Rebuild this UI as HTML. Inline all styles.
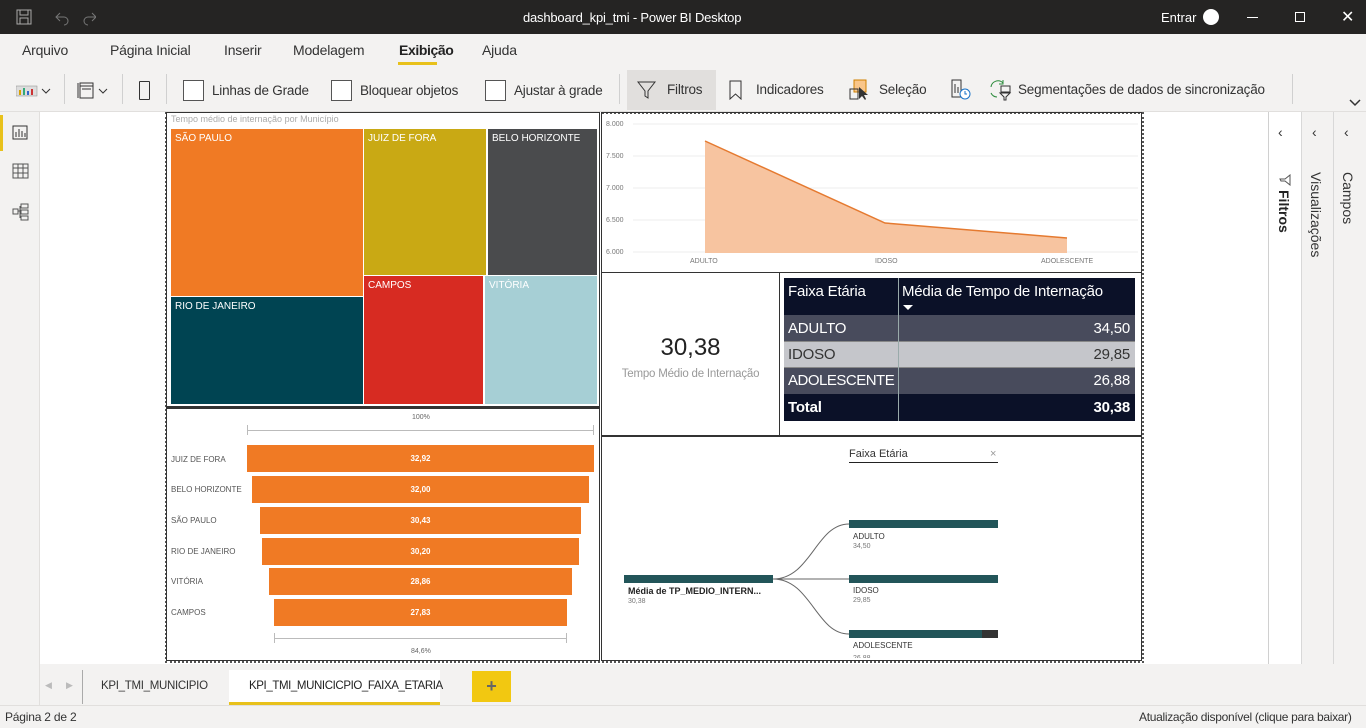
<!DOCTYPE html>
<html><head><meta charset="utf-8"><style>
*{margin:0;padding:0;box-sizing:border-box}
body{width:1366px;height:728px;overflow:hidden;font-family:"Liberation Sans",sans-serif;background:#fff;position:relative}
.a{position:absolute}
.t{position:absolute;white-space:nowrap}
.cb{position:absolute;width:21px;height:21px;border:1px solid #555;background:#fff}
.sep{position:absolute;width:1px;background:#d0d0d0}
.tm{position:absolute;color:#fff;font-size:10px;padding:4px 0 0 4px}
.fl{position:absolute;font-size:8px;color:#555;left:171px}
.fb{position:absolute;background:#f07a24;height:27px;color:#fff;font-size:8px;font-weight:bold;text-align:center;line-height:27px}
.tb{font-size:13.5px;color:#333;letter-spacing:-0.2px}
</style></head><body>
<!-- title bar -->
<div class="a" style="left:0;top:0;width:1366px;height:34px;background:#252423"></div>
<svg class="a" style="left:16px;top:9px" width="80" height="18"><rect x="1" y="1" width="14" height="14" fill="none" stroke="#aaa"/><rect x="4" y="1" width="8" height="5" fill="none" stroke="#aaa"/><rect x="4" y="9" width="8" height="6" fill="none" stroke="#aaa"/><path d="M44 4 L40 8 L44 12 M40 8 H48 A4 4 0 0 1 48 16" fill="none" stroke="#777"/><path d="M76 4 L80 8 L76 12 M80 8 H72 A4 4 0 0 0 72 16" fill="none" stroke="#777"/></svg>
<div class="t" style="left:523px;top:10px;color:#fff;font-size:13px;letter-spacing:-0.2px">dashboard_kpi_tmi - Power BI Desktop</div>
<div class="t" style="left:1161px;top:10px;color:#fff;font-size:13px">Entrar</div>
<div class="a" style="left:1203px;top:9px;width:16px;height:16px;border-radius:50%;background:#fff"></div>
<div class="a" style="left:1247px;top:17px;width:11px;height:1px;background:#fff"></div>
<div class="a" style="left:1295px;top:12px;width:10px;height:10px;border:1px solid #fff"></div>
<div class="t" style="left:1341px;top:7px;color:#fff;font-size:16px">✕</div>
<!-- menu -->
<div class="a" style="left:0;top:34px;width:1366px;height:78px;background:#f3f2f1;border-bottom:1px solid #e1dfdd"></div>
<div class="t tb" style="left:22px;top:42px;font-size:14px">Arquivo</div>
<div class="t tb" style="left:110px;top:42px;font-size:14px">Página Inicial</div>
<div class="t tb" style="left:224px;top:42px;font-size:14px">Inserir</div>
<div class="t tb" style="left:293px;top:42px;font-size:14px">Modelagem</div>
<div class="t" style="left:399px;top:42px;font-size:14px;color:#222;font-weight:bold;letter-spacing:-0.4px">Exibição</div>
<div class="a" style="left:398px;top:62px;width:39px;height:3px;background:#e8c11b"></div>
<div class="t tb" style="left:482px;top:42px;font-size:14px">Ajuda</div>
<!-- toolbar -->
<svg class="a" style="left:16px;top:83px" width="50" height="14"><rect x="0" y="3" width="21" height="10" fill="#ddd" stroke="#888" stroke-width=".5"/><rect x="3" y="7" width="2" height="5" fill="#d9a100"/><rect x="7" y="5" width="2" height="7" fill="#3a7"/><rect x="11" y="8" width="2" height="4" fill="#36c"/><rect x="15" y="6" width="2" height="6" fill="#c33"/><path d="M26 6 L30 10 L34 6" fill="none" stroke="#333"/></svg>
<div class="sep" style="left:64px;top:74px;height:30px"></div>
<svg class="a" style="left:77px;top:80px" width="36" height="20"><rect x="3" y="3" width="13" height="15" fill="none" stroke="#333"/><path d="M1 3V18M3 6H16M5 9H14" stroke="#333"/><path d="M22 9 L26 13 L30 9" fill="none" stroke="#333"/></svg>
<div class="sep" style="left:122px;top:74px;height:30px"></div>
<div class="a" style="left:139px;top:81px;width:11px;height:19px;border:1px solid #333;border-radius:1px"></div>
<div class="sep" style="left:166px;top:74px;height:30px"></div>
<div class="cb" style="left:183px;top:80px"></div><div class="t tb" style="left:212px;top:83px">Linhas de Grade</div>
<div class="cb" style="left:331px;top:80px"></div><div class="t tb" style="left:360px;top:83px">Bloquear objetos</div>
<div class="cb" style="left:485px;top:80px"></div><div class="t tb" style="left:514px;top:83px">Ajustar à grade</div>
<div class="sep" style="left:619px;top:74px;height:30px"></div>
<div class="a" style="left:627px;top:70px;width:89px;height:40px;background:#e1dfdd"></div>
<svg class="a" style="left:637px;top:80px" width="20" height="20"><path d="M1 2H18L11 11V18L8 16V11Z" fill="none" stroke="#333"/></svg>
<div class="t tb" style="left:667px;top:82px">Filtros</div>
<svg class="a" style="left:728px;top:80px" width="16" height="20"><path d="M2 1H13V19L7.5 14L2 19Z" fill="none" stroke="#333"/></svg>
<div class="t tb" style="left:756px;top:82px">Indicadores</div>
<svg class="a" style="left:849px;top:79px" width="22" height="22"><rect x="5" y="1" width="12" height="12" fill="#f9c68a" stroke="#d08000"/><rect x="1" y="10" width="8" height="10" fill="none" stroke="#333"/><path d="M10 8L10 20L13 17L16 21L17 20L15 16L19 16Z" fill="#333"/></svg>
<div class="t tb" style="left:879px;top:82px">Seleção</div>
<svg class="a" style="left:950px;top:79px" width="22" height="22"><rect x="2" y="1" width="9" height="17" fill="none" stroke="#333"/><path d="M5 5V14M8 8V14" stroke="#333"/><circle cx="15" cy="15" r="5" fill="#fff" stroke="#1a73c8"/><path d="M15 12V15H17" stroke="#1a73c8" fill="none"/></svg>
<svg class="a" style="left:988px;top:79px" width="24" height="22"><path d="M3 8A7 7 0 0 1 15 4M15 1V5H11" fill="none" stroke="#2a8a3a"/><path d="M3 14A7 7 0 0 0 9 18" fill="none" stroke="#2a8a3a"/><rect x="13" y="7" width="9" height="6" fill="none" stroke="#333"/><path d="M12 14H22L18 18V21H16V18Z" fill="none" stroke="#333"/></svg>
<div class="t tb" style="left:1018px;top:82px">Segmentações de dados de sincronização</div>
<div class="sep" style="left:1292px;top:74px;height:30px"></div>
<svg class="a" style="left:1349px;top:98px" width="12" height="10"><path d="M1 2L6 7L11 2" fill="none" stroke="#333" stroke-width="1.5"/></svg>
<!-- left rail -->
<div class="a" style="left:0;top:112px;width:40px;height:552px;background:#f3f2f1;border-right:1px solid #e1dfdd"></div>
<div class="a" style="left:0;top:115px;width:3px;height:36px;background:#e8c11b"></div>
<svg class="a" style="left:12px;top:123px" width="18" height="18"><rect x="1" y="3" width="14" height="13" fill="none" stroke="#333"/><path d="M4 14V9M7 14V6M10 14V8M13 14V10" stroke="#333"/></svg>
<svg class="a" style="left:12px;top:163px" width="18" height="18"><rect x="1" y="1" width="15" height="14" fill="none" stroke="#555"/><path d="M1 5H16M1 10H16M6 1V15M11 1V15" stroke="#555"/></svg>
<svg class="a" style="left:12px;top:203px" width="18" height="18"><rect x="1" y="6" width="5" height="5" fill="none" stroke="#555"/><rect x="9" y="1" width="7" height="4" fill="none" stroke="#555"/><rect x="9" y="7" width="7" height="4" fill="none" stroke="#555"/><rect x="9" y="13" width="7" height="4" fill="none" stroke="#555"/><path d="M6 8H9M8 3V15" stroke="#555" fill="none"/></svg>
<!-- right panes -->
<div class="a" style="left:1268px;top:112px;width:1px;height:552px;background:#d0d0d0"></div>
<div class="a" style="left:1301px;top:112px;width:65px;height:552px;background:#f3f2f1"></div>
<div class="a" style="left:1301px;top:112px;width:1px;height:552px;background:#d8d8d8"></div>
<div class="a" style="left:1333px;top:112px;width:1px;height:552px;background:#d8d8d8"></div>
<div class="t" style="left:1278px;top:124px;font-size:14px;color:#333">‹</div>
<div class="t" style="left:1312px;top:124px;font-size:14px;color:#333">‹</div>
<div class="t" style="left:1344px;top:124px;font-size:14px;color:#333">‹</div>
<svg class="a" style="left:1279px;top:174px" width="12" height="12"><path d="M1 1H11L7 6V10L5 11V6Z" fill="none" stroke="#555" transform="rotate(90 6 6)"/></svg>
<div class="t" style="left:1276px;top:190px;font-size:14px;font-weight:bold;color:#222;writing-mode:vertical-rl">Filtros</div>
<div class="t" style="left:1308px;top:172px;font-size:14px;color:#333;writing-mode:vertical-rl">Visualizações</div>
<div class="t" style="left:1340px;top:172px;font-size:14px;color:#333;writing-mode:vertical-rl">Campos</div>
<!-- page border -->
<div class="a" style="left:165px;top:112px;width:979px;height:551px;border:2px dotted #555"></div>
<!-- treemap -->
<div class="a" style="left:166px;top:112px;width:434px;height:295px;background:#fff;border:1px solid #333"></div>
<div class="t" style="left:171px;top:114px;font-size:9px;color:#aaa">Tempo médio de internação por Município</div>
<div class="tm" style="left:171px;top:129px;width:192px;height:167px;background:#f07a24">SÃO PAULO</div>
<div class="tm" style="left:171px;top:297px;width:192px;height:107px;background:#004452">RIO DE JANEIRO</div>
<div class="tm" style="left:364px;top:129px;width:122px;height:146px;background:#c9a914">JUIZ DE FORA</div>
<div class="tm" style="left:488px;top:129px;width:109px;height:146px;background:#4a4b4d">BELO HORIZONTE</div>
<div class="tm" style="left:364px;top:276px;width:119px;height:128px;background:#d72b22">CAMPOS</div>
<div class="tm" style="left:485px;top:276px;width:112px;height:128px;background:#a6cfd5">VITÓRIA</div>
<!-- funnel -->
<div class="a" style="left:166px;top:407px;width:434px;height:254px;border:1px solid #333;border-top:2px solid #333"></div>
<div class="t" style="left:412px;top:414px;font-size:7px;color:#666">100%</div>
<div class="a" style="left:247px;top:430px;width:347px;height:1px;background:#bbb"></div>
<div class="a" style="left:247px;top:425px;width:1px;height:10px;background:#bbb"></div>
<div class="a" style="left:593px;top:425px;width:1px;height:10px;background:#bbb"></div>
<div class="fl" style="top:455px">JUIZ DE FORA</div>
<div class="fl" style="top:485px">BELO HORIZONTE</div>
<div class="fl" style="top:516px">SÃO PAULO</div>
<div class="fl" style="top:547px">RIO DE JANEIRO</div>
<div class="fl" style="top:577px">VITÓRIA</div>
<div class="fl" style="top:608px">CAMPOS</div>
<div class="fb" style="left:247px;top:445px;width:347px">32,92</div>
<div class="fb" style="left:252px;top:476px;width:337px">32,00</div>
<div class="fb" style="left:260px;top:507px;width:321px">30,43</div>
<div class="fb" style="left:262px;top:538px;width:317px">30,20</div>
<div class="fb" style="left:269px;top:568px;width:303px">28,86</div>
<div class="fb" style="left:274px;top:599px;width:293px">27,83</div>
<div class="a" style="left:274px;top:638px;width:293px;height:1px;background:#bbb"></div>
<div class="a" style="left:274px;top:633px;width:1px;height:10px;background:#bbb"></div>
<div class="a" style="left:566px;top:633px;width:1px;height:10px;background:#bbb"></div>
<div class="t" style="left:411px;top:648px;font-size:7px;color:#666">84,6%</div>
<!-- area chart -->
<div class="a" style="left:601px;top:112px;width:541px;height:161px;border:1px solid #333"></div>
<svg class="a" style="left:601px;top:112px" width="541" height="160">
<g font-family="Liberation Sans" font-size="7" fill="#777">
<text x="5" y="14">8.000</text><text x="5" y="46">7.500</text><text x="5" y="78">7.000</text><text x="5" y="110">6.500</text><text x="5" y="142">6.000</text>
<text x="89" y="151">ADULTO</text><text x="274" y="151">IDOSO</text><text x="440" y="151">ADOLESCENTE</text></g>
<g stroke="#eee"><path d="M32 12H537M32 44H537M32 76H537M32 108H537M32 140H537"/></g>
<path d="M104 29L284 111L466 126V141H104Z" fill="#f7c4a0"/>
<path d="M104 29L284 111L466 126" fill="none" stroke="#e57a30" stroke-width="1.5"/>
</svg>
<!-- card -->
<div class="a" style="left:601px;top:272px;width:179px;height:164px;border:1px solid #333"></div>
<div class="t" style="left:601px;top:334px;width:179px;text-align:center;font-size:24px;color:#222">30,38</div>
<div class="t" style="left:601px;top:368px;width:179px;text-align:center;font-size:11.5px;color:#999;letter-spacing:-0.2px">Tempo Médio de Internação</div>
<!-- table -->
<div class="a" style="left:779px;top:272px;width:363px;height:164px;border:1px solid #333"></div>
<div class="a" style="left:784px;top:278px;width:351px;height:143px;font-size:15px;letter-spacing:-0.2px">
<div class="a" style="left:0;top:0;width:351px;height:37px;background:#0b1128;color:#fff"></div>
<div class="t" style="left:4px;top:5px;color:#fff">Faixa Etária</div>
<div class="t" style="left:118px;top:5px;color:#fff">Média de Tempo de Internação</div>
<svg class="a" style="left:118px;top:26px" width="12" height="8"><path d="M1 1H11L6 6Z" fill="#fff"/></svg>
<div class="a" style="left:0;top:37px;width:351px;height:26px;background:#484b5c"></div>
<div class="a" style="left:0;top:63px;width:351px;height:26px;background:#c5c6cb"></div>
<div class="a" style="left:0;top:89px;width:351px;height:27px;background:#484b5c"></div>
<div class="a" style="left:0;top:116px;width:351px;height:27px;background:#0b1128"></div>
<div class="a" style="left:0;top:63px;width:351px;height:1px;background:#888"></div>
<div class="a" style="left:0;top:89px;width:351px;height:1px;background:#888"></div>
<div class="a" style="left:114px;top:0;width:1px;height:143px;background:#9aa"></div>
<div class="t" style="left:4px;top:42px;color:#fff">ADULTO</div><div class="t" style="right:5px;top:42px;color:#fff">34,50</div>
<div class="t" style="left:4px;top:68px;color:#333">IDOSO</div><div class="t" style="right:5px;top:68px;color:#333">29,85</div>
<div class="t" style="left:4px;top:94px;color:#fff;letter-spacing:-0.5px">ADOLESCENTE</div><div class="t" style="right:5px;top:94px;color:#fff">26,88</div>
<div class="t" style="left:4px;top:121px;color:#fff;font-weight:bold;font-size:15px">Total</div><div class="t" style="right:5px;top:121px;color:#fff;font-weight:bold">30,38</div>
</div>
<!-- decomposition -->
<div class="a" style="left:601px;top:435px;width:541px;height:226px;border:1px solid #333;border-top:2px solid #333"></div>
<div class="t" style="left:849px;top:448px;font-size:11px;color:#333">Faixa Etária</div>
<div class="t" style="left:990px;top:448px;font-size:11px;color:#999">×</div>
<div class="a" style="left:849px;top:462px;width:149px;height:1px;background:#222"></div>
<svg class="a" style="left:601px;top:500px" width="541" height="160"><g fill="none" stroke="#666"><path d="M172 79C210 79 215 24 248 24"/><path d="M172 79H248"/><path d="M172 79C210 79 215 134 248 134"/></g></svg>
<div class="a" style="left:624px;top:575px;width:149px;height:8px;background:#225559"></div>
<div class="t" style="left:628px;top:586px;font-size:9px;font-weight:bold;color:#222">Média de TP_MEDIO_INTERN...</div>
<div class="t" style="left:628px;top:598px;font-size:7px;color:#777">30,38</div>
<div class="a" style="left:849px;top:520px;width:149px;height:8px;background:#225559"></div>
<div class="t" style="left:853px;top:532px;font-size:8px;color:#333">ADULTO</div>
<div class="t" style="left:853px;top:543px;font-size:7px;color:#777">34,50</div>
<div class="a" style="left:849px;top:575px;width:149px;height:8px;background:#225559"></div>
<div class="t" style="left:853px;top:586px;font-size:8px;color:#333">IDOSO</div>
<div class="t" style="left:853px;top:597px;font-size:7px;color:#777">29,85</div>
<div class="a" style="left:849px;top:630px;width:149px;height:8px;background:#225559"></div>
<div class="a" style="left:982px;top:630px;width:16px;height:8px;background:#333"></div>
<div class="t" style="left:853px;top:641px;font-size:8px;color:#333">ADOLESCENTE</div>
<div class="a" style="left:853px;top:652px;width:60px;height:6px;overflow:hidden;font-size:7px;color:#777;line-height:13px">26,88</div>
<!-- tabs -->
<div class="a" style="left:0;top:664px;width:1366px;height:64px;background:#f3f2f1"></div>
<div class="a" style="left:0;top:664px;width:40px;height:42px;border-right:1px solid #e1dfdd"></div>
<div class="t" style="left:45px;top:680px;font-size:9px;color:#bbb">◀</div>
<div class="t" style="left:66px;top:680px;font-size:9px;color:#bbb">▶</div>
<div class="a" style="left:82px;top:670px;width:1px;height:34px;background:#aaa"></div>
<div class="t" style="left:101px;top:680px;font-size:11.5px;color:#333;letter-spacing:-0.3px">KPI_TMI_MUNICIPIO</div>
<div class="a" style="left:229px;top:670px;width:211px;height:35px;background:#fff;border-bottom:3px solid #e8c11b"></div>
<div class="t" style="left:249px;top:680px;font-size:11.5px;color:#222;letter-spacing:-0.4px">KPI_TMI_MUNICICPIO_FAIXA_ETARIA</div>
<div class="a" style="left:472px;top:671px;width:39px;height:31px;background:#f2c811;color:#666;font-size:18px;text-align:center;line-height:31px;font-weight:bold">+</div>
<div class="a" style="left:0;top:705px;width:1366px;height:1px;background:#e1dfdd"></div>
<div class="t" style="left:5px;top:710px;font-size:12px;color:#333;letter-spacing:-0.2px">Página 2 de 2</div>
<div class="t" style="left:1139px;top:710px;font-size:12px;color:#333;letter-spacing:-0.3px">Atualização disponível (clique para baixar)</div>
</body></html>
